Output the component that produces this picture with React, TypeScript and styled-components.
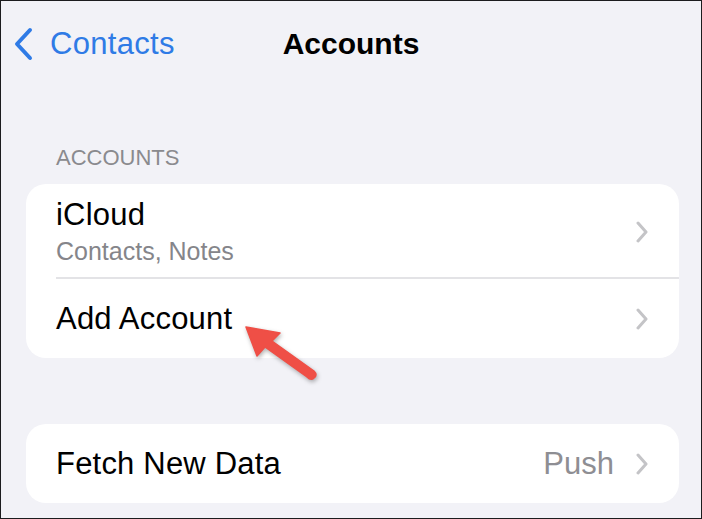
import React from 'react';
import styled, { createGlobalStyle } from 'styled-components';

const GlobalStyle = createGlobalStyle`
  html, body {
    margin: 0;
    padding: 0;
    background: #f2f2f7;
  }
  * {
    box-sizing: border-box;
  }
`;

const Screen = styled.div`
  position: relative;
  width: 702px;
  height: 519px;
  overflow: hidden;
  border: 1px solid #1c1c1e;
  background: #f2f2f7;
  font-family: "Liberation Sans", Arial, sans-serif;
  color: #000;
`;

const NavBar = styled.div`
  display: grid;
  grid-template-columns: 1fr auto 1fr;
  align-items: center;
  height: 86px;
`;

const BackButton = styled.div`
  display: flex;
  align-items: center;
  gap: 16px;
  padding-left: 13px;
  color: #2f7be6;
  font-size: 31px;
  letter-spacing: 0.3px;
`;

const Title = styled.div`
  font-size: 30px;
  font-weight: 700;
  letter-spacing: 0px;
`;

const SectionHeader = styled.div`
  margin: 58px 0 13px 55px;
  font-size: 22px;
  line-height: 26px;
  color: #8a8a8e;
`;

const Card = styled.div<{ $top?: number }>`
  margin: ${p => p.$top ?? 0}px 22px 0 25px;
  background: #fff;
  border-radius: 20px;
  overflow: hidden;
`;

const Row = styled.div<{ $height: number; $divider?: boolean }>`
  position: relative;
  display: flex;
  align-items: center;
  height: ${p => p.$height}px;
  padding: 0 30px 0 30px;

  ${p => p.$divider && `
    &::after {
      content: '';
      position: absolute;
      left: 30px;
      right: 0;
      bottom: 0;
      height: 2px;
      background: #e3e3e6;
    }
  `}
`;

const RowText = styled.div`
  flex: 1;
  display: flex;
  flex-direction: column;
`;

const RowTitle = styled.div`
  font-size: 31px;
  line-height: 36px;
  letter-spacing: 0.2px;
`;

const RowSubtitle = styled.div`
  font-size: 25px;
  line-height: 30px;
  margin-top: 3px;
  color: #85858a;
`;

const RowValue = styled.div`
  font-size: 31px;
  color: #8e8e93;
  margin-right: 21px;
`;

const Chevron = styled.svg`
  flex: none;
  width: 14px;
  height: 22px;
`;

const ArrowOverlay = styled.svg`
  position: absolute;
  left: 235px;
  top: 314px;
  width: 90px;
  height: 74px;
  pointer-events: none;
  filter: drop-shadow(1px 2px 2px rgba(0, 0, 0, 0.3));
`;

const RowChevron = () => (
  <Chevron viewBox="0 0 14 22">
    <path d="M3 2 L11 11 L3 20" fill="none" stroke="#c4c4c7" strokeWidth="3" strokeLinecap="round" strokeLinejoin="round" />
  </Chevron>
);

export default function App() {
  return (
    <>
      <GlobalStyle />
      <Screen>
        <NavBar>
          <BackButton>
            <svg width="20" height="34" viewBox="0 0 20 34">
              <path d="M16 3 L3 17 L16 31" fill="none" stroke="#2f7be6" strokeWidth="4" strokeLinecap="round" strokeLinejoin="round" />
            </svg>
            Contacts
          </BackButton>
          <Title>Accounts</Title>
          <div />
        </NavBar>

        <SectionHeader>ACCOUNTS</SectionHeader>

        <Card>
          <Row $height={95} $divider>
            <RowText>
              <RowTitle>iCloud</RowTitle>
              <RowSubtitle>Contacts, Notes</RowSubtitle>
            </RowText>
            <RowChevron />
          </Row>
          <Row $height={79}>
            <RowText>
              <RowTitle>Add Account</RowTitle>
            </RowText>
            <RowChevron />
          </Row>
        </Card>

        <Card $top={66}>
          <Row $height={79}>
            <RowText>
              <RowTitle>Fetch New Data</RowTitle>
            </RowText>
            <RowValue>Push</RowValue>
            <RowChevron />
          </Row>
        </Card>

        <ArrowOverlay viewBox="0 0 90 74">
          <path
            d="M10 12 L44 18 L36 26 L78 56 Q82 60 78 63 Q75 66 71 62 L29 32 L21 41 Z"
            fill="#ef4f46"
            stroke="#ef4f46"
            strokeWidth="1.5"
            strokeLinejoin="round"
          />
        </ArrowOverlay>
      </Screen>
    </>
  );
}
